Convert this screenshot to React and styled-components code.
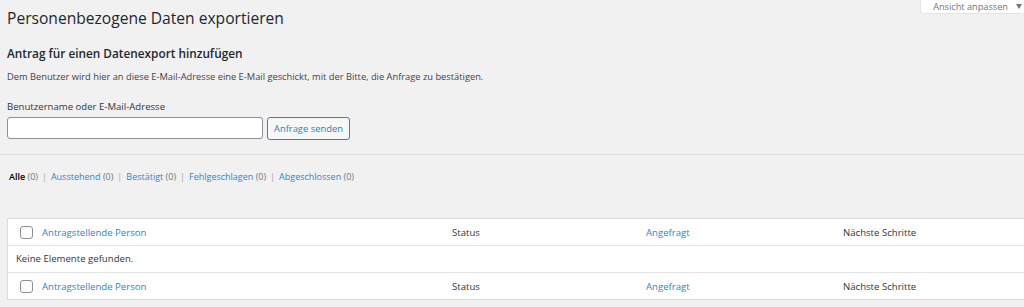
import styled, { createGlobalStyle } from 'styled-components'

const GlobalStyle = createGlobalStyle`
  html, body {
    margin: 0;
    overflow: hidden;
  }
  body {
    background-color: #f1f1f1;
    color: #444;
    font-family: "Open Sans", "Noto Sans", sans-serif;
    font-size: 10px;
  }
`

const Page = styled.div`
  width: 1040px;
  padding-left: 7px;
  box-sizing: border-box;
`
const Header = styled.div`
  display: flex;
  justify-content: space-between;
  align-items: flex-start;
  width: 1022px;
`
const Title = styled.h1`
  margin: 7px 0 0;
  font-size: 15.6px;
  font-weight: 400;
  line-height: 22px;
  color: #23282d;
`
const ScreenTab = styled.button`
  margin: 0;
  height: 14px;
  padding: 0 6px 0 12px;
  background: #fff;
  border: 1px solid #e2e4e7;
  border-top: none;
  border-radius: 0 0 3px 3px;
  color: #72777c;
  font-family: inherit;
  font-size: 9.2px;
  line-height: 13px;
  display: flex;
  gap: 8px;
  align-items: center;
  &::after {
    content: '';
    border-left: 3.5px solid transparent;
    border-right: 3.5px solid transparent;
    border-top: 5px solid #72777c;
  }
`
const SubTitle = styled.h2`
  margin: 15px 0 0;
  font-size: 11.8px;
  font-weight: 600;
  line-height: 18px;
  color: #23282d;
`
const Desc = styled.p`
  margin: 8px 0 0;
  font-size: 9.3px;
  line-height: 14px;
`
const Label = styled.label`
  display: block;
  margin: 16px 0 0;
  font-size: 9.6px;
  line-height: 14px;
  color: #32373c;
`
const FormRow = styled.div`
  display: flex;
  gap: 4px;
  margin-top: 3px;
`
const Input = styled.input`
  width: 256px;
  height: 22px;
  box-sizing: border-box;
  border: 1px solid #8c8f94;
  border-radius: 3px;
  background: #fff;
  padding: 0 6px;
`
const Button = styled.button`
  height: 23px;
  box-sizing: border-box;
  padding: 0 6px;
  background: #f6f7f7;
  border: 1px solid #2f86c6;
  border-radius: 3px;
  color: #2f7fbd;
  font-family: inherit;
  font-size: 9.4px;
`
const Divider = styled.hr`
  margin: 14px 0 0 -7px;
  border: none;
  border-top: 1px solid #e0e0e0;
  width: 1040px;
`
const Filters = styled.ul`
  display: flex;
  margin: 15px 0 0;
  padding: 0 0 0 2px;
  list-style: none;
  font-size: 9px;
  line-height: 14px;
  color: #72777c;
`
const FilterItem = styled.li`
  &:not(:last-child)::after {
    content: '|';
    margin: 0 4px;
    color: #a0a5aa;
  }
`
const FilterLink = styled.a`
  color: ${p => (p.$current ? '#000' : '#2f86c6')};
  font-weight: ${p => (p.$current ? 600 : 400)};
  text-decoration: none;
`
const Table = styled.div`
  margin-top: 34px;
  width: 1030px;
  background: #fff;
  border: 1px solid #dcdcde;
  font-size: 9.6px;
  color: #32373c;
`
const Row = styled.div`
  display: grid;
  grid-template-columns: 24px 410px 194px 197px 1fr;
  align-items: center;
  height: 26px;
  border-top: ${p => (p.$first ? 'none' : '1px solid #e4e4e4')};
`
const Cell = styled.div`
  padding-left: 10px;
`
const Box = styled.span`
  display: block;
  width: 11px;
  height: 11px;
  margin-left: 12px;
  border: 1px solid #8c8f94;
  border-radius: 3px;
  background: #fff;
`
const Link = styled.a`
  color: #2f86c6;
  text-decoration: none;
`
const Empty = styled.div`
  height: 26px;
  line-height: 26px;
  padding-left: 8px;
  border-top: 1px solid #e4e4e4;
`

const filters = [
  ['Alle', true],
  ['Ausstehend'],
  ['Bestätigt'],
  ['Fehlgeschlagen'],
  ['Abgeschlossen'],
]

const ColumnRow = ({ first }) => (
  <Row $first={first}>
    <Box />
    <Cell><Link href="#">Antragstellende Person</Link></Cell>
    <Cell>Status</Cell>
    <Cell><Link href="#">Angefragt</Link></Cell>
    <Cell>Nächste Schritte</Cell>
  </Row>
)

const App = () => (
  <Page>
    <GlobalStyle />
    <Header>
      <Title>Personenbezogene Daten exportieren</Title>
      <ScreenTab>Ansicht anpassen</ScreenTab>
    </Header>
    <SubTitle>Antrag für einen Datenexport hinzufügen</SubTitle>
    <Desc>Dem Benutzer wird hier an diese E-Mail-Adresse eine E-Mail geschickt, mit der Bitte, die Anfrage zu bestätigen.</Desc>
    <Label htmlFor="user">Benutzername oder E-Mail-Adresse</Label>
    <FormRow>
      <Input id="user" type="text" />
      <Button>Anfrage senden</Button>
    </FormRow>
    <Divider />
    <Filters>
      {filters.map(([name, current]) => (
        <FilterItem key={name}>
          <FilterLink href="#" $current={current}>{name}</FilterLink> (0)
        </FilterItem>
      ))}
    </Filters>
    <Table>
      <ColumnRow first />
      <Empty>Keine Elemente gefunden.</Empty>
      <ColumnRow />
    </Table>
  </Page>
)

export default App
